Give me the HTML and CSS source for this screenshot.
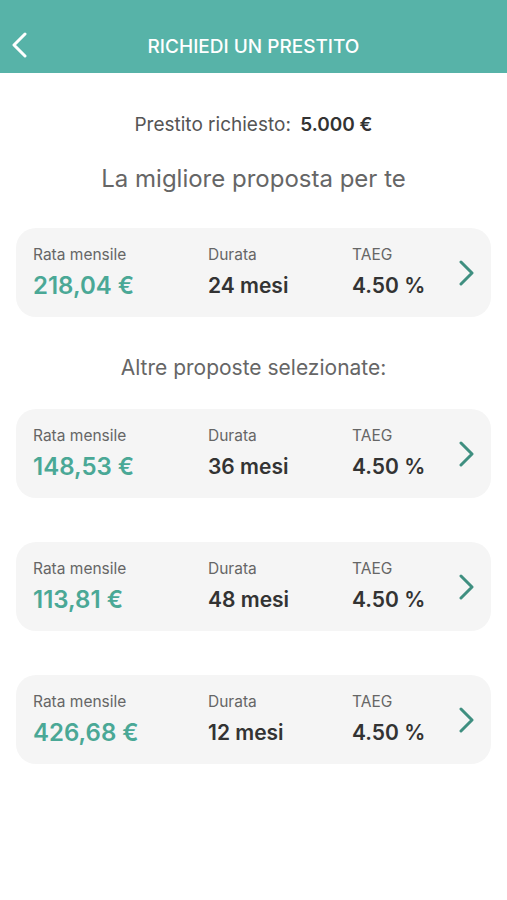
FILE: index.html
```html
<!DOCTYPE html>
<html lang="it">

<head>
    <meta charset="UTF-8">
    <meta name="viewport" content="width=device-width, initial-scale=1.0">
    <title>Richiedi un prestito</title>
    <link rel="stylesheet" href="styles.css">
</head>

<body>

    <header class="topbar">
        <button class="back-btn" aria-label="Indietro">
            <svg width="16" height="26" viewBox="0 0 16 26">
                <path d="M14 2 L3 13 L14 24" fill="none" stroke="#fff" stroke-width="3" stroke-linecap="round" stroke-linejoin="round" />
            </svg>
        </button>
        <h1 class="topbar-title">RICHIEDI UN PRESTITO</h1>
    </header>

    <main class="content">
        <p class="requested">Prestito richiesto: <strong>5.000 €</strong></p>

        <h2 class="heading heading-best">La migliore proposta per te</h2>

        <div class="offer">
            <div class="offer-col">
                <span class="offer-label">Rata mensile</span>
                <span class="offer-value offer-rate">218,04 €</span>
            </div>
            <div class="offer-col">
                <span class="offer-label">Durata</span>
                <span class="offer-value">24 mesi</span>
            </div>
            <div class="offer-col">
                <span class="offer-label">TAEG</span>
                <span class="offer-value">4.50 %</span>
            </div>
            <svg class="offer-arrow" width="16" height="26" viewBox="0 0 16 26">
                <path d="M3 2 L14 13 L3 24" fill="none" stroke="#3f8f80" stroke-width="3" stroke-linecap="round" stroke-linejoin="round" />
            </svg>
        </div>

        <h3 class="heading heading-other">Altre proposte selezionate:</h3>

        <div class="offer-list">
            <div class="offer">
                <div class="offer-col">
                    <span class="offer-label">Rata mensile</span>
                    <span class="offer-value offer-rate">148,53 €</span>
                </div>
                <div class="offer-col">
                    <span class="offer-label">Durata</span>
                    <span class="offer-value">36 mesi</span>
                </div>
                <div class="offer-col">
                    <span class="offer-label">TAEG</span>
                    <span class="offer-value">4.50 %</span>
                </div>
                <svg class="offer-arrow" width="16" height="26" viewBox="0 0 16 26">
                    <path d="M3 2 L14 13 L3 24" fill="none" stroke="#3f8f80" stroke-width="3" stroke-linecap="round" stroke-linejoin="round" />
                </svg>
            </div>

            <div class="offer">
                <div class="offer-col">
                    <span class="offer-label">Rata mensile</span>
                    <span class="offer-value offer-rate">113,81 €</span>
                </div>
                <div class="offer-col">
                    <span class="offer-label">Durata</span>
                    <span class="offer-value">48 mesi</span>
                </div>
                <div class="offer-col">
                    <span class="offer-label">TAEG</span>
                    <span class="offer-value">4.50 %</span>
                </div>
                <svg class="offer-arrow" width="16" height="26" viewBox="0 0 16 26">
                    <path d="M3 2 L14 13 L3 24" fill="none" stroke="#3f8f80" stroke-width="3" stroke-linecap="round" stroke-linejoin="round" />
                </svg>
            </div>

            <div class="offer">
                <div class="offer-col">
                    <span class="offer-label">Rata mensile</span>
                    <span class="offer-value offer-rate">426,68 €</span>
                </div>
                <div class="offer-col">
                    <span class="offer-label">Durata</span>
                    <span class="offer-value">12 mesi</span>
                </div>
                <div class="offer-col">
                    <span class="offer-label">TAEG</span>
                    <span class="offer-value">4.50 %</span>
                </div>
                <svg class="offer-arrow" width="16" height="26" viewBox="0 0 16 26">
                    <path d="M3 2 L14 13 L3 24" fill="none" stroke="#3f8f80" stroke-width="3" stroke-linecap="round" stroke-linejoin="round" />
                </svg>
            </div>
        </div>
    </main>

</body>

</html>
```

FILE: styles.css
```css
body {
    margin: 0;
    font-family: Inter, 'Liberation Sans', sans-serif;
    background-color: #fff;
    color: #333;
}

.topbar {
    height: 73px;
    background-color: #57b3a8;
    display: flex;
    align-items: center;
    justify-content: center;
    position: relative;
}

.back-btn {
    position: absolute;
    left: 11px;
    top: 32px;
    padding: 0;
    border: 0;
    background: none;
    display: flex;
}

.topbar-title {
    margin: 0;
    padding-top: 20px;
    font-size: 19px;
    font-weight: 500;
    color: #fff;
}

.content {
    padding: 0 16px 40px 16px;
    display: flex;
    flex-direction: column;
}

.requested {
    margin: 41px 0 0;
    line-height: 22px;
    text-align: center;
    font-size: 19px;
    color: #555;
}

.requested strong {
    margin-left: 4px;
    color: #333;
    font-weight: 600;
}

.heading {
    margin: 0;
    text-align: center;
    font-weight: 400;
    color: #666;
}

.heading-best {
    margin-top: 29px;
    line-height: 28px;
    font-size: 24px;
}

.heading-other {
    margin-top: 38px;
    line-height: 26px;
    font-size: 21px;
}

.offer {
    height: 89px;
    box-sizing: border-box;
    background-color: #f5f5f5;
    border-radius: 20px;
    display: grid;
    grid-template-columns: 175px 144px 1fr auto;
    align-items: center;
    padding: 0 17px;
}

.heading-best + .offer {
    margin-top: 35px;
}

.offer-list {
    margin-top: 28px;
    display: flex;
    flex-direction: column;
    gap: 44px;
}

.offer-col {
    display: flex;
    flex-direction: column;
    gap: 7px;
}

.offer-label {
    line-height: 20px;
    font-size: 15.5px;
    color: #666;
}

.offer-value {
    line-height: 28px;
    font-size: 21px;
    font-weight: 600;
    color: #333;
}

.offer-rate {
    font-size: 24px;
    color: #4aa896;
}
```
